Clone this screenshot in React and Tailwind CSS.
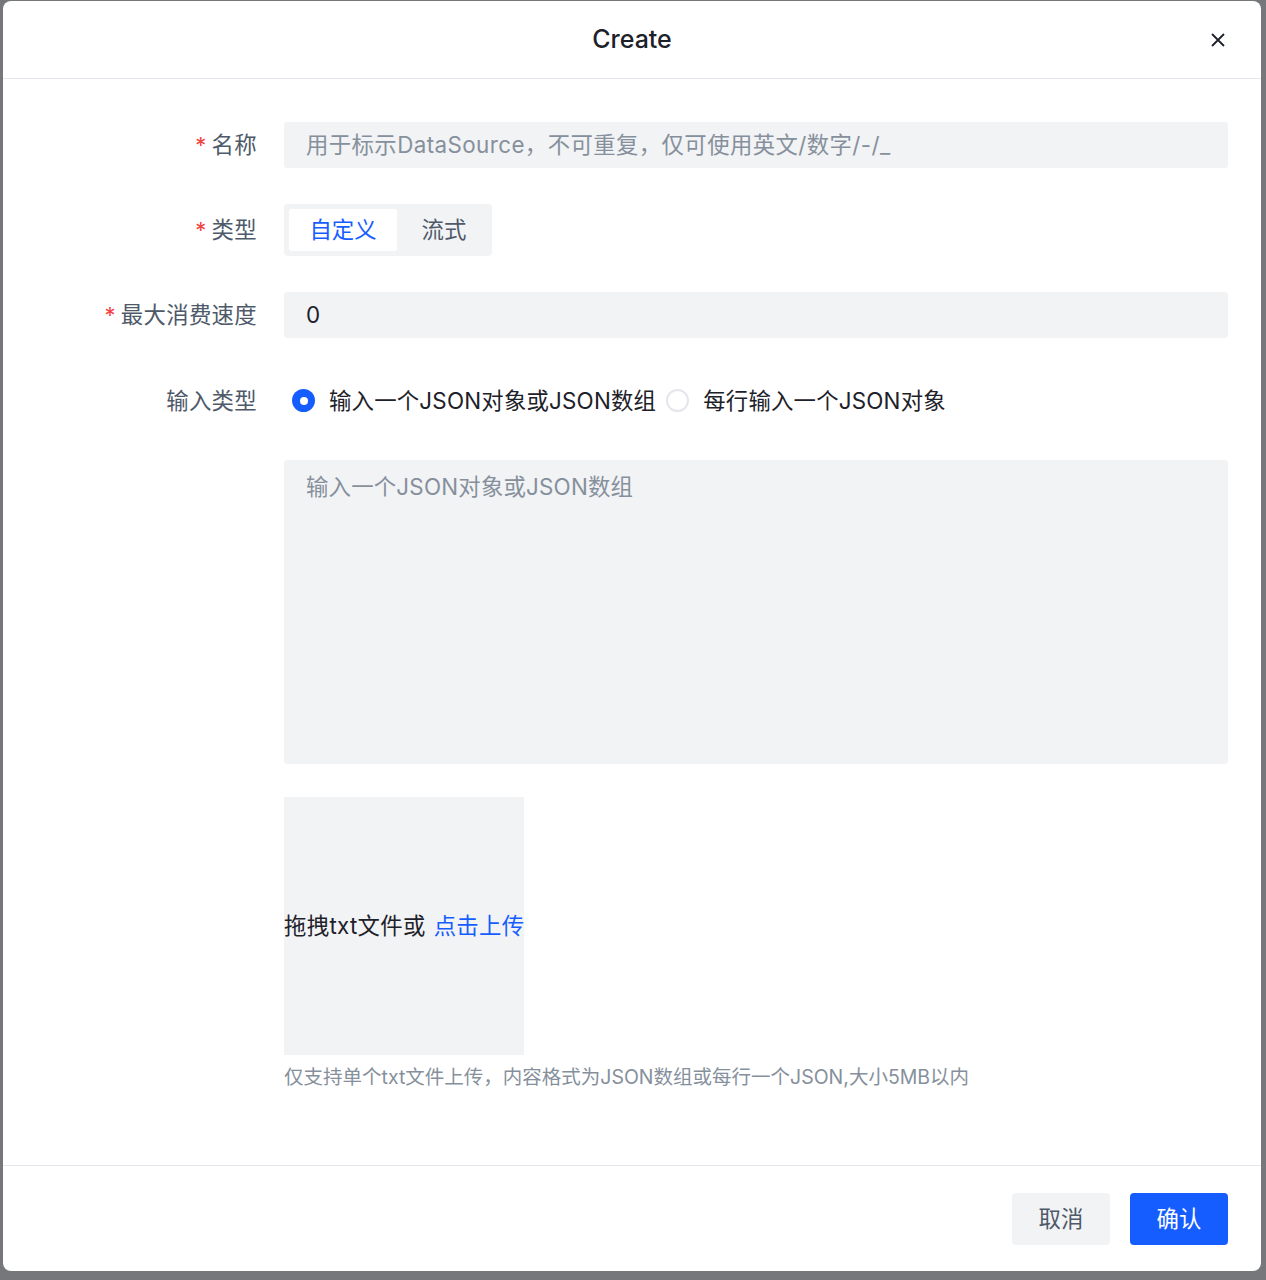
const FONT = { fontFamily: 'Inter, "Noto Sans CJK SC", sans-serif' };

const Label = ({ required, children }) => (
  <div className="w-[254px] shrink-0 flex items-center justify-end text-[22.4px] tracking-[0.3px] text-[#4e5969]">
    {required && <span className="text-[#f53f3f] mr-[5px] text-[22px] leading-none">*</span>}
    <span>{children}</span>
  </div>
);

const Radio = ({ checked, children }) => (
  <label className="flex items-center gap-[14px] text-[22.4px] tracking-[0.2px] text-[#1d2129]">
    {checked ? (
      <span className="w-[23px] h-[23px] rounded-full bg-[#165dff] flex items-center justify-center">
        <span className="w-[8px] h-[8px] rounded-full bg-white" />
      </span>
    ) : (
      <span className="w-[23px] h-[23px] rounded-full border-2 border-[#e5e6eb] bg-white" />
    )}
    <span>{children}</span>
  </label>
);

export default function App() {
  return (
    <div className="w-full h-[1280px] bg-[#75777b] pt-[1px] pl-[3px]" style={FONT}>
      <div className="w-[1258px] h-[1270px] bg-white rounded-[8px] flex flex-col">
        {/* Header */}
        <div className="h-[78px] shrink-0 relative flex items-center justify-center border-b border-[#e5e6eb]">
          <h2 className="text-[25px] font-medium text-[#1d2129]">Create</h2>
          <button className="absolute right-[36px] top-[32px] w-[14px] h-[14px] text-[#1d2129]">
            <svg viewBox="0 0 14 14" width="14" height="14" fill="none" stroke="currentColor" strokeWidth="1.8">
              <path d="M1 1L13 13M13 1L1 13" />
            </svg>
          </button>
        </div>

        {/* Body */}
        <div className="flex-1 pt-[43px]">
          <div className="flex h-[46px]">
            <Label required>名称</Label>
            <div className="ml-[27px] w-[944px] h-[46px] bg-[#f2f3f5] rounded-[3px] flex items-center px-[22px] text-[22.4px] tracking-[0.4px] text-[#86909c]">
              用于标示DataSource，不可重复，仅可使用英文/数字/-/_
            </div>
          </div>

          <div className="flex h-[52px] mt-[36px]">
            <Label required>类型</Label>
            <div className="ml-[27px] h-[52px] bg-[#f2f3f5] rounded-[4px] p-[5px] flex">
              <div className="w-[108px] h-[42px] bg-white rounded-[3px] flex items-center justify-center text-[22.4px] text-[#165dff]">
                自定义
              </div>
              <div className="w-[90px] h-[42px] flex items-center justify-center pl-[4px] text-[22.4px] text-[#4e5969]">
                流式
              </div>
            </div>
          </div>

          <div className="flex h-[46px] mt-[36px]">
            <Label required>最大消费速度</Label>
            <div className="ml-[27px] w-[944px] h-[46px] bg-[#f2f3f5] rounded-[3px] flex items-center px-[22px] text-[22.4px] text-[#1d2129]">
              0
            </div>
          </div>

          <div className="flex h-[46px] mt-[40px]">
            <Label>输入类型</Label>
            <div className="ml-[35px] flex items-center gap-[10px]">
              <Radio checked>输入一个JSON对象或JSON数组</Radio>
              <Radio>每行输入一个JSON对象</Radio>
            </div>
          </div>

          <div className="ml-[281px] mt-[36px] w-[944px]">
            <div className="h-[304px] bg-[#f2f3f5] rounded-[3px] px-[22px] pt-[10px] text-[22.4px] tracking-[0.2px] text-[#86909c]">
              输入一个JSON对象或JSON数组
            </div>

            <div className="mt-[33px] w-[240px] h-[258px] bg-[#f2f3f5] flex items-center whitespace-nowrap text-[22.4px] tracking-[0.3px] text-[#1d2129]">
              <span>拖拽txt文件或</span>
              <span className="text-[#165dff] ml-[8px]">点击上传</span>
            </div>

            <p className="mt-[10px] text-[19.5px] leading-[24px] text-[#86909c]">
              仅支持单个txt文件上传，内容格式为JSON数组或每行一个JSON,大小5MB以内
            </p>
          </div>
        </div>

        {/* Footer */}
        <div className="h-[106px] shrink-0 border-t border-[#e5e6eb] flex items-center justify-end gap-[20px] pr-[33px]">
          <button className="w-[98px] h-[52px] rounded-[4px] bg-[#f2f3f5] text-[22.4px] text-[#4e5969]">取消</button>
          <button className="w-[98px] h-[52px] rounded-[4px] bg-[#165dff] text-[22.4px] text-white">确认</button>
        </div>
      </div>
    </div>
  );
}
